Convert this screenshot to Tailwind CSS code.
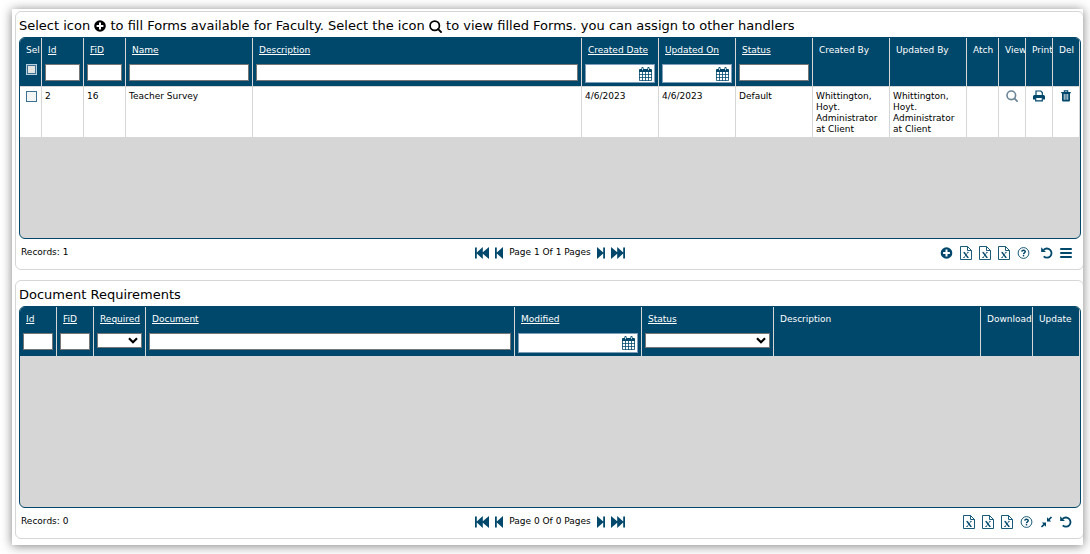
<!DOCTYPE html>
<html lang="en">
<head>
  <meta charset="UTF-8">
  <meta name="viewport" content="width=device-width, initial-scale=1.0">
  <title>Forms</title>
  <script src="https://cdn.jsdelivr.net/npm/@tailwindcss/browser@4"></script>
</head>
<body class="bg-white min-h-screen flex p-[9px] pl-3 pr-[7px] font-['Verdana','DejaVu_Sans',sans-serif] text-[9px] leading-[11px] text-black">

  <!-- icon set -->
  <svg class="hidden">
    <symbol id="plus" viewBox="0 0 12 12"><path fill="currentColor" fill-rule="evenodd" d="M6 .2a5.8 5.8 0 1 0 0 11.6A5.8 5.8 0 0 0 6 .2zM5 2.6h2V5h2.400v2H7v2.400H5V7H2.600V5H5z"/></symbol>
    <symbol id="search" viewBox="0 0 12 12"><circle cx="5.300" cy="5.300" r="4.300" fill="none" stroke="currentColor" stroke-width="1.600"/><path d="M8.400 8.400l2.700 2.700" stroke="currentColor" stroke-width="1.700" stroke-linecap="round"/></symbol>
    <symbol id="calendar" viewBox="0 0 13 14"><path fill="currentColor" fill-rule="evenodd" d="M1 2h11q1 0 1 1v10q0 1-1 1H1q-1 0-1-1V3q0-1 1-1zM.8 5v2.200h2.300V5zM3.900 5v2.200h2.200V5zM6.900 5v2.200h2.200V5zM9.900 5v2.200h2.300V5zM.8 8v2.200h2.300V8zM3.900 8v2.200h2.200V8zM6.900 8v2.200h2.200V8zM9.900 8v2.200h2.300V8zM.8 11v2.200h2.300V11zM3.900 11v2.200h2.200V11zM6.900 11v2.200h2.200V11zM9.900 11v2.200h2.300V11z"/><path d="M3.500 1.200v1.800M9.500 1.200v1.800" stroke="currentColor" stroke-width="2.200" stroke-linecap="round"/><path d="M3.500 1.200v2M9.500 1.200v2" stroke="#fff" stroke-width=".8"/></symbol>
    <symbol id="print" viewBox="0 0 12 12"><path d="M3 6V1h4.800L9.300 2.500V6" fill="none" stroke="currentColor" stroke-width="1.200"/><path fill="currentColor" fill-rule="evenodd" d="M1.500 5h9Q12 5 12 6.500v3H9.900V8H2.100v1.500H0v-3Q0 5 1.500 5z"/><path d="M2.700 8v2.900h6.600V8" fill="none" stroke="currentColor" stroke-width="1.200"/></symbol>
    <symbol id="trash" viewBox="0 0 12 12"><path d="M4.300 2V.9h3.400V2" fill="none" stroke="currentColor" stroke-width="1.100"/><path fill="currentColor" fill-rule="evenodd" d="M1.200 1.900h9.600v1.300H10v7q0 1.300-1.200 1.300H3.200Q2 11.500 2 10.200v-7h-.8zM3.800 4v5.800h.8V4zM5.600 4v5.800h.8V4zM7.400 4v5.800h.8V4z"/></symbol>
    <symbol id="file" viewBox="0 0 12 14"><path d="M.5.5h7L11.500 4.500v9H.5zM7.500.5v4h4" fill="none" stroke="currentColor" stroke-width=".9"/><path d="M4.100 6.500l3.800 5" stroke="currentColor" stroke-width="1.300"/><path d="M7.900 6.500l-3.800 5M3.200 6.400h1.900M6.900 6.400h1.900M3.200 11.500h1.800M7 11.500h1.800" stroke="currentColor" stroke-width=".7"/></symbol>
    <symbol id="question" viewBox="0 0 12 12"><circle cx="6" cy="6" r="5.400" fill="none" stroke="currentColor" stroke-width=".9"/><path d="M4.200 4.700Q4.400 3.200 6 3.200T7.800 4.600Q7.800 5.300 6.900 5.900T6 7.300" fill="none" stroke="currentColor" stroke-width="1.400"/><path d="M5.300 8h1.400v1.400H5.300z" fill="currentColor"/></symbol>
    <symbol id="undo" viewBox="0 0 12 12"><path d="M2.600 2.900A4.600 4.600 0 1 1 2.700 9.400" fill="none" stroke="currentColor" stroke-width="1.800"/><path d="M.2.300V5h4.700z" fill="currentColor"/></symbol>
    <symbol id="bars" viewBox="0 0 12 12"><path d="M.9 2h10.200M.9 6h10.200M.9 10h10.200" stroke="currentColor" stroke-width="1.800" stroke-linecap="round"/></symbol>
    <symbol id="compress" viewBox="0 0 12 12"><path fill="currentColor" d="M6.500 5.500V1.300L8 2.800 10.400.4l1.200 1.200L9.200 4l1.500 1.500zM5.500 6.500v4.200L4 9.200l-2.400 2.400-1.200-1.200L2.800 8 1.300 6.500z"/></symbol>
    <symbol id="first" viewBox="0 0 14 12"><path fill="currentColor" d="M0 .5h1.800v5L7.800 0v5.200L14 0v12L7.800 6.800V12L1.800 6.500v5H0z"/></symbol>
    <symbol id="prev" viewBox="0 0 8 12"><path fill="currentColor" d="M0 .5h1.800v5L8 0v12L1.800 6.500v5H0z"/></symbol>
  </svg>

  <main class="flex-1 min-w-0 bg-white pt-[2px] pl-[3px] pb-[5px] overflow-hidden shadow-[0_1px_10px_rgba(0,0,0,0.5)]">

    <section class="-mr-px border border-[#d6d6d6] rounded-md pl-[3px] pr-[2px] pb-[3px]">
      <h1 class="h-[25px] pt-[3px] flex items-center text-[13px] leading-4 whitespace-pre">Select icon <svg class="size-3"><use href="#plus"/></svg> to fill Forms available for Faculty. Select the icon <svg class="size-[13px]"><use href="#search"/></svg> to view filled Forms. you can assign to other handlers</h1>

      <div class="min-h-[202px] bg-[#d6d6d6] border border-[#00486b] rounded-md overflow-hidden">
        <table class="w-full table-fixed border-separate border-spacing-0">
          <colgroup>
            <col class="w-[22px]"><col class="w-[42px]"><col class="w-[42px]"><col class="w-[127px]"><col>
            <col class="w-[77px]"><col class="w-[77px]"><col class="w-[77px]"><col class="w-[77px]"><col class="w-[77px]">
            <col class="w-8"><col class="w-[27px]"><col class="w-[27px]"><col class="w-[27px]">
          </colgroup>
          <thead class="bg-[#00486b] text-white text-left align-top [&_th]:h-[49px] [&_th]:font-normal [&_th]:pt-[7px] [&_th]:px-[3px] [&_th]:border-r [&_th]:border-b [&_th]:border-[#d6d6d6] [&_th]:align-top [&_th]:overflow-hidden [&_th]:whitespace-nowrap [&_a]:underline [&_a]:ml-[3px]">
            <tr>
              <th><label for="all" class="ml-[3px]">Sel</label><input id="all" type="checkbox" class="appearance-none block size-[11px] mt-2 ml-[3px] bg-[#e4e4e0] border border-[#b9cfdd] outline outline-[#3c7196] -outline-offset-2"></th>
              <th><a href="#">Id</a><input type="text" aria-label="Id" class="block w-full h-[17px] mt-2 bg-white border border-[#767676] text-black"></th>
              <th><a href="#">FiD</a><input type="text" aria-label="FiD" class="block w-full h-[17px] mt-2 bg-white border border-[#767676] text-black"></th>
              <th><a href="#">Name</a><input type="text" aria-label="Name" class="block w-full h-[17px] mt-2 bg-white border border-[#767676] text-black"></th>
              <th><a href="#">Description</a><input type="text" aria-label="Description" class="block w-full h-[17px] mt-2 bg-white border border-[#767676] text-black"></th>
              <th><a href="#">Created Date</a>
                <div class="flex items-center h-[19px] mt-2 pr-[2px] bg-white border border-[#7f9db9] text-[#00486b]"><input type="text" aria-label="Created Date" class="flex-1 min-w-0 h-full text-black"><button aria-label="Pick created date"><svg class="w-[13px] h-[14px]"><use href="#calendar"/></svg></button></div></th>
              <th><a href="#">Updated On</a>
                <div class="flex items-center h-[19px] mt-2 pr-[2px] bg-white border border-[#7f9db9] text-[#00486b]"><input type="text" aria-label="Updated On" class="flex-1 min-w-0 h-full text-black"><button aria-label="Pick updated date"><svg class="w-[13px] h-[14px]"><use href="#calendar"/></svg></button></div></th>
              <th><a href="#">Status</a><input type="text" aria-label="Status" class="block w-full h-[17px] mt-2 bg-white border border-[#767676] text-black"></th>
              <th><span class="ml-[3px]">Created By</span></th>
              <th><span class="ml-[3px]">Updated By</span></th>
              <th><span class="ml-[3px]">Atch</span></th>
              <th><span class="ml-[3px]">View</span></th>
              <th><span class="ml-[3px]">Print</span></th>
              <th><span class="ml-[3px]">Del</span></th>
            </tr>
          </thead>
          <tbody class="bg-white [&_td]:h-[50px] [&_td]:align-top [&_td]:pt-1 [&_td]:px-[3px] [&_td]:border-r [&_td]:border-[#d6d6d6] [&_svg]:size-3 [&_svg]:-mt-px [&_button]:block [&_button]:mx-auto">
            <tr>
              <td><input type="checkbox" aria-label="Select form 2" class="appearance-none block size-[11px] ml-[3px] bg-[#f4f6f6] border border-[#3c7196]"></td>
              <td>2</td>
              <td>16</td>
              <td>Teacher Survey</td>
              <td></td>
              <td>4/6/2023</td>
              <td>4/6/2023</td>
              <td>Default</td>
              <td>Whittington, Hoyt. Administrator at Client</td>
              <td>Whittington, Hoyt. Administrator at Client</td>
              <td></td>
              <td><button aria-label="View" class="text-[#6b8496]"><svg><use href="#search"/></svg></button></td>
              <td><button aria-label="Print" class="text-[#00486b]"><svg><use href="#print"/></svg></button></td>
              <td><button aria-label="Delete" class="text-[#00486b]"><svg><use href="#trash"/></svg></button></td>
            </tr>
          </tbody>
        </table>
      </div>

      <footer class="h-[27px] grid grid-cols-3 items-center">
        <span class="pl-[2px]">Records: 1</span>
        <div class="flex items-center justify-center gap-[6px] whitespace-nowrap [&_button]:text-[#00486b]">
          <button aria-label="First page"><svg class="w-[14px] h-3"><use href="#first"/></svg></button>
          <button aria-label="Previous page"><svg class="w-2 h-3"><use href="#prev"/></svg></button>
          <span>Page 1 Of 1 Pages</span>
          <button aria-label="Next page"><svg class="w-2 h-3 rotate-180"><use href="#prev"/></svg></button>
          <button aria-label="Last page"><svg class="w-[14px] h-3 rotate-180"><use href="#first"/></svg></button>
        </div>
        <div class="flex items-center justify-end gap-[7px] pr-[9px] text-[#00486b]">
          <button aria-label="Add"><svg class="w-[13px] h-3"><use href="#plus"/></svg></button>
          <button aria-label="Export page"><svg class="w-3 h-[14px]"><use href="#file"/></svg></button>
          <button aria-label="Export all"><svg class="w-3 h-[14px]"><use href="#file"/></svg></button>
          <button aria-label="Export selected"><svg class="w-3 h-[14px]"><use href="#file"/></svg></button>
          <button aria-label="Help"><svg class="w-[13px] h-3"><use href="#question"/></svg></button>
          <button aria-label="Refresh" class="ml-1"><svg class="size-3"><use href="#undo"/></svg></button>
          <button aria-label="Menu"><svg class="size-3"><use href="#bars"/></svg></button>
        </div>
      </footer>
    </section>

    <section class="mt-[10px] -mr-px border border-[#d6d6d6] rounded-md pl-[3px] pr-[2px] pb-[3px]">
      <h2 class="h-[25px] pt-[3px] flex items-center text-[13px] leading-4">Document Requirements</h2>

      <div class="min-h-[202px] bg-[#d6d6d6] border border-[#00486b] rounded-md overflow-hidden">
        <table class="w-full table-fixed border-separate border-spacing-0">
          <colgroup>
            <col class="w-[37px]"><col class="w-[37px]"><col class="w-[52px]"><col><col class="w-[127px]">
            <col class="w-[132px]"><col class="w-[207px]"><col class="w-[52px]"><col class="w-[47px]">
          </colgroup>
          <thead class="bg-[#00486b] text-white text-left [&_th]:h-[49px] [&_th]:font-normal [&_th]:pt-[7px] [&_th]:px-[3px] [&_th]:border-r [&_th]:border-[#d6d6d6] [&_th]:align-top [&_th]:overflow-hidden [&_th]:whitespace-nowrap [&_a]:underline [&_a]:ml-[3px]">
            <tr>
              <th><a href="#">Id</a><input type="text" aria-label="Id" class="block w-full h-[17px] mt-2 bg-white border border-[#767676] text-black"></th>
              <th><a href="#">FiD</a><input type="text" aria-label="FiD" class="block w-full h-[17px] mt-2 bg-white border border-[#767676] text-black"></th>
              <th><a href="#">Required</a>
                <div class="relative mt-2"><select aria-label="Required" class="appearance-none block w-full h-[15px] bg-white border border-[#767676] text-black"><option></option><option>Yes</option><option>No</option></select><svg viewBox="0 0 10 7" class="absolute right-1 top-1 w-[10px] h-[7px] pointer-events-none"><path d="M1 1.200l4 4 4-4" fill="none" stroke="#000" stroke-width="2.200"/></svg></div></th>
              <th><a href="#">Document</a><input type="text" aria-label="Document" class="block w-full h-[17px] mt-2 bg-white border border-[#767676] text-black"></th>
              <th><a href="#">Modified</a>
                <div class="flex items-center h-[20px] mt-2 pr-[2px] bg-white border border-[#7f9db9] text-[#00486b]"><input type="text" aria-label="Modified" class="flex-1 min-w-0 h-full text-black"><button aria-label="Pick modified date"><svg class="w-[13px] h-[14px]"><use href="#calendar"/></svg></button></div></th>
              <th><a href="#">Status</a>
                <div class="relative mt-2"><select aria-label="Status" class="appearance-none block w-full h-[15px] bg-white border border-[#767676] text-black"><option></option><option>Default</option></select><svg viewBox="0 0 10 7" class="absolute right-1 top-1 w-[10px] h-[7px] pointer-events-none"><path d="M1 1.200l4 4 4-4" fill="none" stroke="#000" stroke-width="2.200"/></svg></div></th>
              <th><span class="ml-[3px]">Description</span></th>
              <th><span class="ml-[3px]">Download</span></th>
              <th><span class="ml-[3px]">Update</span></th>
            </tr>
          </thead>
        </table>
      </div>

      <footer class="h-[27px] grid grid-cols-3 items-center">
        <span class="pl-[2px]">Records: 0</span>
        <div class="flex items-center justify-center gap-[6px] whitespace-nowrap [&_button]:text-[#00486b]">
          <button aria-label="First page"><svg class="w-[14px] h-3"><use href="#first"/></svg></button>
          <button aria-label="Previous page"><svg class="w-2 h-3"><use href="#prev"/></svg></button>
          <span>Page 0 Of 0 Pages</span>
          <button aria-label="Next page"><svg class="w-2 h-3 rotate-180"><use href="#prev"/></svg></button>
          <button aria-label="Last page"><svg class="w-[14px] h-3 rotate-180"><use href="#first"/></svg></button>
        </div>
        <div class="flex items-center justify-end gap-[7px] pr-[9px] text-[#00486b]">
          <button aria-label="Export page"><svg class="w-3 h-[14px]"><use href="#file"/></svg></button>
          <button aria-label="Export all"><svg class="w-3 h-[14px]"><use href="#file"/></svg></button>
          <button aria-label="Export selected"><svg class="w-3 h-[14px]"><use href="#file"/></svg></button>
          <button aria-label="Help"><svg class="w-[13px] h-3"><use href="#question"/></svg></button>
          <button aria-label="Collapse"><svg class="w-[13px] h-3"><use href="#compress"/></svg></button>
          <button aria-label="Refresh"><svg class="size-3"><use href="#undo"/></svg></button>
        </div>
      </footer>
    </section>
  </main>
</body>
</html>
